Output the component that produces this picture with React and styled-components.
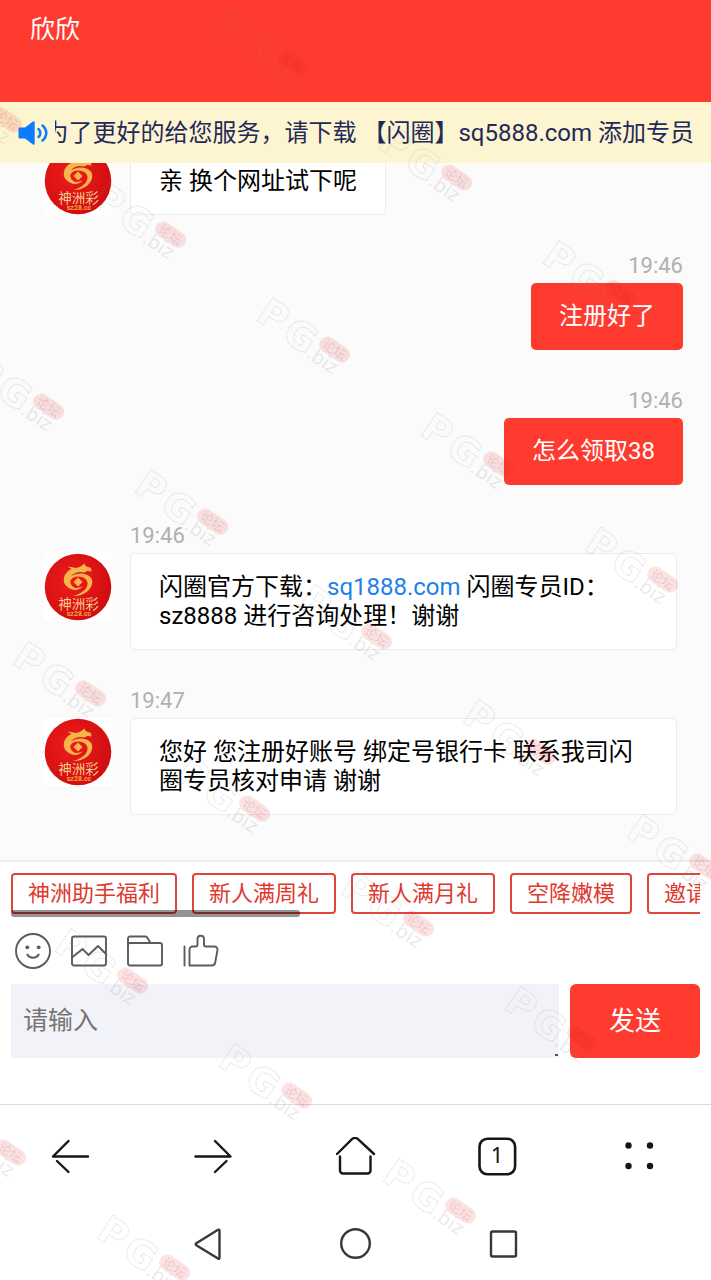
import React from 'react'
import styled, { createGlobalStyle, css } from 'styled-components'

const GlobalStyle = createGlobalStyle`
  * {
    box-sizing: border-box;
  }
  body {
    margin: 0;
    background: #ffffff;
    font-family: Roboto, "Noto Sans CJK SC", sans-serif;
  }
  button {
    font-family: inherit;
    border: none;
    background: none;
    padding: 0;
    cursor: pointer;
  }
  svg {
    display: block;
  }
`

const Page = styled.div`
  position: relative;
  display: flex;
  flex-direction: column;
  height: 100vh;
  overflow: hidden;
`

const Header = styled.header`
  height: 102px;
  flex-shrink: 0;
  padding: 12px 30px;
  background: #ff3b30;
`

const AgentName = styled.h1`
  margin: 0;
  color: #ffffff;
  font-size: 25px;
  font-weight: 400;
  line-height: 36px;
`

const Notice = styled.div`
  display: flex;
  align-items: center;
  flex-shrink: 0;
  height: 61px;
  padding: 0 17px 0 18px;
  background: #fdf5d0;
`

const NoticeText = styled.div`
  flex: 1;
  display: flex;
  justify-content: flex-end;
  margin-left: 6px;
  overflow: hidden;
  white-space: nowrap;
  font-size: 24px;
  line-height: 36px;
  color: #23295a;
`

const Chat = styled.main`
  flex: 1;
  min-height: 0;
  display: flex;
  flex-direction: column;
  justify-content: flex-end;
  padding: 0 28px 45px 44px;
  overflow: hidden;
  background: #fbfbfb;
`

const Row = styled.div`
  display: flex;
  flex-shrink: 0;
  align-items: flex-end;
  flex-direction: column;
  margin-top: 38px;

  ${props => !props.$mine && css`
    align-items: flex-start;
    padding: 0 6px 0 86px;
  `}
`

const Time = styled.time`
  margin-bottom: 4px;
  color: #b0b0b0;
  font-size: 22px;
  line-height: 26px;
`

const BubbleLine = styled.div`
  display: flex;
  align-items: flex-start;
  gap: 18px;
  margin-left: ${props => (props.$mine ? '0' : '-86px')};
`

const Bubble = styled.p`
  margin: 0;
  padding: 19px 28px 18px;
  border: 1px solid #ebebeb;
  border-radius: 5px;
  background: #ffffff;
  color: #000000;
  font-size: 24px;
  line-height: 29px;

  a {
    color: #1e80ea;
    text-decoration: none;
  }

  ${props => props.$mine && css`
    padding: 19px 28px;
    border: none;
    background: #ff3b30;
    color: #ffffff;
  `}
`

const AvatarBox = styled.div`
  flex-shrink: 0;
  width: 68px;
  height: 68px;
  background: #ffffff;
`

const Panel = styled.footer`
  flex-shrink: 0;
  padding: 11px 11px 46px;
  border-top: 2px solid #ededed;
  background: #ffffff;
`

const Chips = styled.div`
  position: relative;
  display: flex;
  gap: 15px;
  padding-bottom: 3px;
  overflow: hidden;

  &::after {
    content: '';
    position: absolute;
    left: 0;
    bottom: 0;
    width: 42%;
    height: 7px;
    border-radius: 3px;
    background: rgba(0, 0, 0, 0.42);
  }
`

const Chip = styled.button`
  && {
    flex-shrink: 0;
    height: 41px;
    padding: 0 15px;
    border: 2px solid #e0453b;
    border-radius: 4px;
    color: #e0382e;
    font-size: 22px;
    line-height: 32px;
  }
`

const Tools = styled.div`
  display: flex;
  gap: 20px;
  padding: 16px 4px 15px;
`

const Tool = styled.button`
  width: 36px;
  height: 36px;
`

const Compose = styled.form`
  display: flex;
  gap: 11px;
  height: 74px;
`

const Field = styled.div`
  position: relative;
  flex: 1;

  &::after {
    content: '';
    position: absolute;
    right: 1px;
    bottom: 2px;
    width: 3px;
    height: 2px;
    background: #555555;
  }
`

const Input = styled.textarea`
  display: block;
  width: 100%;
  height: 100%;
  padding: 19px 12px 17px;
  border: none;
  outline: none;
  resize: none;
  background: #f2f3f8;
  color: #222222;
  font-family: inherit;
  font-size: 25px;
  line-height: 36px;

  &::placeholder {
    color: #757575;
  }
`

const Send = styled.button`
  && {
    width: 130px;
    padding-bottom: 6px;
    border-radius: 6px;
    background: #ff3b30;
    color: #ffffff;
    font-size: 26px;
  }
`

const BrowserBar = styled.nav`
  display: flex;
  flex-shrink: 0;
  height: 104px;
  border-top: 1px solid #dcdcdc;
  background: #ffffff;
`

const BarButton = styled.button`
  display: flex;
  flex: 1;
  align-items: center;
  justify-content: center;
`

const SystemBar = styled.nav`
  display: flex;
  flex-shrink: 0;
  justify-content: center;
  height: 72px;
  background: #ffffff;
`

const SystemButton = styled.button`
  display: flex;
  align-items: center;
  justify-content: center;
  width: 148px;
`

const Overlay = styled.svg`
  position: absolute;
  top: 0;
  left: 0;
  width: 100%;
  height: 100%;
  pointer-events: none;
`

const messages = [
  { id: 1, time: '19:45', text: '亲 换个网址试下呢' },
  { id: 2, time: '19:46', text: '注册好了', mine: true },
  { id: 3, time: '19:46', text: '怎么领取38', mine: true },
  {
    id: 4,
    time: '19:46',
    text: (
      <>
        闪圈官方下载：<a href="#sq1888">sq1888.com</a> 闪圈专员ID：sz8888 进行咨询处理！谢谢
      </>
    ),
  },
  { id: 5, time: '19:47', text: '您好 您注册好账号 绑定号银行卡 联系我司闪圈专员核对申请 谢谢' },
]

const chips = ['神洲助手福利', '新人满周礼', '新人满月礼', '空降嫩模', '邀请好友']

const tools = [
  {
    label: '表情',
    icon: (
      <>
        <circle cx="18" cy="18" r="17" />
        <circle cx="12.3" cy="14.3" r="1.9" fill="#5c5c5c" stroke="none" />
        <circle cx="23.7" cy="14.3" r="1.9" fill="#5c5c5c" stroke="none" />
        <path d="M12.300 21.500c2.400 4.400 9 4.400 11.400 0" />
      </>
    ),
  },
  {
    label: '图片',
    icon: (
      <>
        <rect x="1" y="3.5" width="34" height="29" rx="2" />
        <path d="M1 24.500l10.500-8.500 6 6 9.500-9 8 8" />
      </>
    ),
  },
  {
    label: '文件',
    icon: (
      <>
        <rect x="1" y="10" width="34" height="22.500" rx="2" />
        <path d="M1 12V5.500a2 2 0 0 1 2-2h15.500a2 2 0 0 1 1.700 1L23.500 10" />
      </>
    ),
  },
  {
    label: '点赞',
    icon: (
      <>
        <path d="M1.500 13.500v19M6.500 32.500V16.500a3 3 0 0 1 3-3h3c1.500 0 2-.8 2-2V6c0-4.400 6.500-4.400 6.500 0v5.500c0 1.300.7 2 2 2h8.500a3 3 0 0 1 3 3.500l-2.300 12.500a3.500 3.500 0 0 1-3.400 3z" />
      </>
    ),
  },
]

const Avatar = () => (
  <AvatarBox>
    <svg width="68" height="68" viewBox="0 0 68 68" role="img" aria-label="神洲彩">
      <defs>
        <radialGradient id="avatarRed" cx="0.4" cy="0.4" r="0.65">
          <stop offset="0" stopColor="#ee1c1c" />
          <stop offset="1" stopColor="#cf0d10" />
        </radialGradient>
      </defs>
      <circle cx="34" cy="34" r="33.300" fill="url(#avatarRed)" />
      <g fill="#f6b54a">
        <path d="M23.500 13.500l9 1.500 4-1.500 4-3 1 2.500 5.500 2 .5 3.500-4-.5-3.500 1.500-4-.5c-6 .5-10.500 4-10 9 .4 4 3 6.500 7.500 8.500-8 .5-14-3.500-13.700-10 .3-5 3.200-8.500 7.700-10.500z" />
        <path d="M31 21.500c9-3 17.500 1 17.300 7.500-.3 8-9 14.500-19.300 14 8-2 14-6.500 14.500-12 .4-4.500-4-7.500-9.500-7.500-6 .2-9 4-7.500 8 1.500 3.500 7 4.500 12 2-3 4-11 5-14.500 0-3-5 0-10 7-12z" />
        <path d="M34 24.500l4.500 4.500-4.500 4.500-4.500-4.500z" />
      </g>
      <text x="34.500" y="56" textAnchor="middle" fill="#f3cf8e" fontSize="13.500" fontFamily='"Noto Sans CJK SC", sans-serif'>
        神洲彩
      </text>
      <text x="35" y="63" textAnchor="middle" fill="#f0a93c" fontSize="7" fontWeight="700">
        sz28.cc
      </text>
    </svg>
  </AvatarBox>
)

const Message = ({ time, text, mine }) => (
  <Row $mine={mine}>
    <Time>{time}</Time>
    <BubbleLine $mine={mine}>
      {!mine && <Avatar />}
      <Bubble $mine={mine}>{text}</Bubble>
    </BubbleLine>
  </Row>
)

// the stamps repeat on a slanted grid
const stamps = []
for (let i = -6; i <= 8; i++) {
  for (let j = -6; j <= 8; j++) {
    const x = 273 + i * 164 - j * 122
    const y = 314 + i * 115 + j * 172
    if (x > -80 && x < 670 && y > 0 && y < 1270) {
      stamps.push({ x, y })
    }
  }
}

const Watermark = () => (
  <Overlay aria-hidden="true">
    {stamps.map(({ x, y }) => (
      <g key={`${x}-${y}`} transform={`translate(${x} ${y}) rotate(34)`}>
        <g
          fill="none"
          stroke="#8a8a8a"
          strokeOpacity="0.26"
          strokeWidth="1.200"
          strokeDasharray="1.500 1"
          fontFamily='"DejaVu Sans", sans-serif'
          fontWeight="700"
          fontSize="38"
          textAnchor="middle"
        >
          <text x="1" y="14">P</text>
          <text x="35" y="16">G</text>
        </g>
        <rect x="54" y="-13" width="34" height="16" rx="8" fill="#e8202a" fillOpacity="0.13" />
        <text x="71" y="0" textAnchor="middle" fontSize="13" fill="#7a2020" fillOpacity="0.15">论坛</text>
        <text
          x="50"
          y="17"
          fontFamily='"DejaVu Sans", sans-serif'
          fontSize="19"
          fill="#808080"
          fillOpacity="0.18"
        >
          .biz
        </text>
      </g>
    ))}
  </Overlay>
)

const App = () => {
  return (
    <>
      <GlobalStyle />
      <Page>
        <Header>
          <AgentName>欣欣</AgentName>
        </Header>

        <Notice>
          <svg width="31" height="26" viewBox="0 0 31 26" fill="none" stroke="#0a7cff" strokeWidth="2.500" strokeLinecap="round">
            <path d="M1.500 7.500H7L15 1.500a1 1 0 0 1 1.700.8v21.400a1 1 0 0 1-1.700.8L7 18.500H1.500a1 1 0 0 1-1-1v-9a1 1 0 0 1 1-1z" fill="#0a7cff" stroke="none" />
            <path d="M20.500 9c2.500 2.200 2.500 5.800 0 8M24.500 5.500c5 4 5 11 0 15" />
          </svg>
          <NoticeText>
            <span>为了更好的给您服务，请下载 【闪圈】sq5888.com 添加专员</span>
          </NoticeText>
        </Notice>

        <Chat>
          {messages.map(message => (
            <Message key={message.id} {...message} />
          ))}
        </Chat>

        <Panel>
          <Chips>
            {chips.map(chip => (
              <Chip key={chip} type="button">{chip}</Chip>
            ))}
          </Chips>
          <Tools>
            {tools.map(({ label, icon }) => (
              <Tool key={label} type="button" aria-label={label}>
                <svg width="36" height="36" viewBox="0 0 36 36" fill="none" stroke="#5c5c5c" strokeWidth="1.900" strokeLinecap="round" strokeLinejoin="round">
                  {icon}
                </svg>
              </Tool>
            ))}
          </Tools>
          <Compose onSubmit={e => e.preventDefault()}>
            <Field>
              <Input aria-label="请输入" placeholder="请输入" />
            </Field>
            <Send type="submit">发送</Send>
          </Compose>
        </Panel>

        <BrowserBar>
          <BarButton aria-label="后退">
            <svg width="40" height="40" viewBox="0 0 40 40" fill="none" stroke="#161616" strokeWidth="2.400" strokeLinecap="round" strokeLinejoin="round">
              <path d="M37 19.500H2L17.500 4M6 24L17.500 35" />
            </svg>
          </BarButton>
          <BarButton aria-label="前进">
            <svg width="40" height="40" viewBox="0 0 40 40" fill="none" stroke="#161616" strokeWidth="2.400" strokeLinecap="round" strokeLinejoin="round">
              <path d="M2.500 19.500h35L22 4M33.500 24L22 35" />
            </svg>
          </BarButton>
          <BarButton aria-label="主页">
            <svg width="40" height="40" viewBox="0 0 40 40" fill="none" stroke="#161616" strokeWidth="2.400" strokeLinecap="round" strokeLinejoin="round">
              <path d="M1 17L16 2.200a4.300 4.300 0 0 1 6 0L38 17M4 19.500v14a3 3 0 0 0 3 3h24.500a3 3 0 0 0 3-3V19.500" />
            </svg>
          </BarButton>
          <BarButton aria-label="标签页">
            <svg width="40" height="40" viewBox="0 0 40 40">
              <rect x="1.500" y="1.700" width="35.600" height="35.600" rx="8" fill="none" stroke="#161616" strokeWidth="2.600" />
              <text x="19" y="26" textAnchor="middle" fontFamily='"Noto Sans", sans-serif' fontSize="22" fill="#161616">1</text>
            </svg>
          </BarButton>
          <BarButton aria-label="菜单">
            <svg width="40" height="40" viewBox="0 0 40 40" fill="#161616">
              <circle cx="8.500" cy="8.500" r="3.200" />
              <circle cx="30" cy="8.500" r="3.200" />
              <circle cx="8.500" cy="29" r="3.200" />
              <circle cx="30" cy="29" r="3.200" />
            </svg>
          </BarButton>
        </BrowserBar>

        <SystemBar>
          <SystemButton aria-label="返回">
            <svg width="32" height="32" viewBox="0 0 32 32" fill="none" stroke="#383838" strokeWidth="2.400" strokeLinejoin="round">
              <path d="M4.300 15.200L26 1.800q1.500-.6 1.500 1v27q0 1.500-1.500.8L4.300 17.200q-1.200-1 0-2z" />
            </svg>
          </SystemButton>
          <SystemButton aria-label="桌面">
            <svg width="32" height="32" viewBox="0 0 32 32" fill="none" stroke="#383838" strokeWidth="2.400">
              <circle cx="15.500" cy="15.500" r="14.300" />
            </svg>
          </SystemButton>
          <SystemButton aria-label="最近任务">
            <svg width="32" height="32" viewBox="0 0 32 32" fill="none" stroke="#383838" strokeWidth="2.400">
              <rect x="3" y="3.500" width="25" height="25" rx="1.500" />
            </svg>
          </SystemButton>
        </SystemBar>

        <Watermark />
      </Page>
    </>
  )
}

export default App
